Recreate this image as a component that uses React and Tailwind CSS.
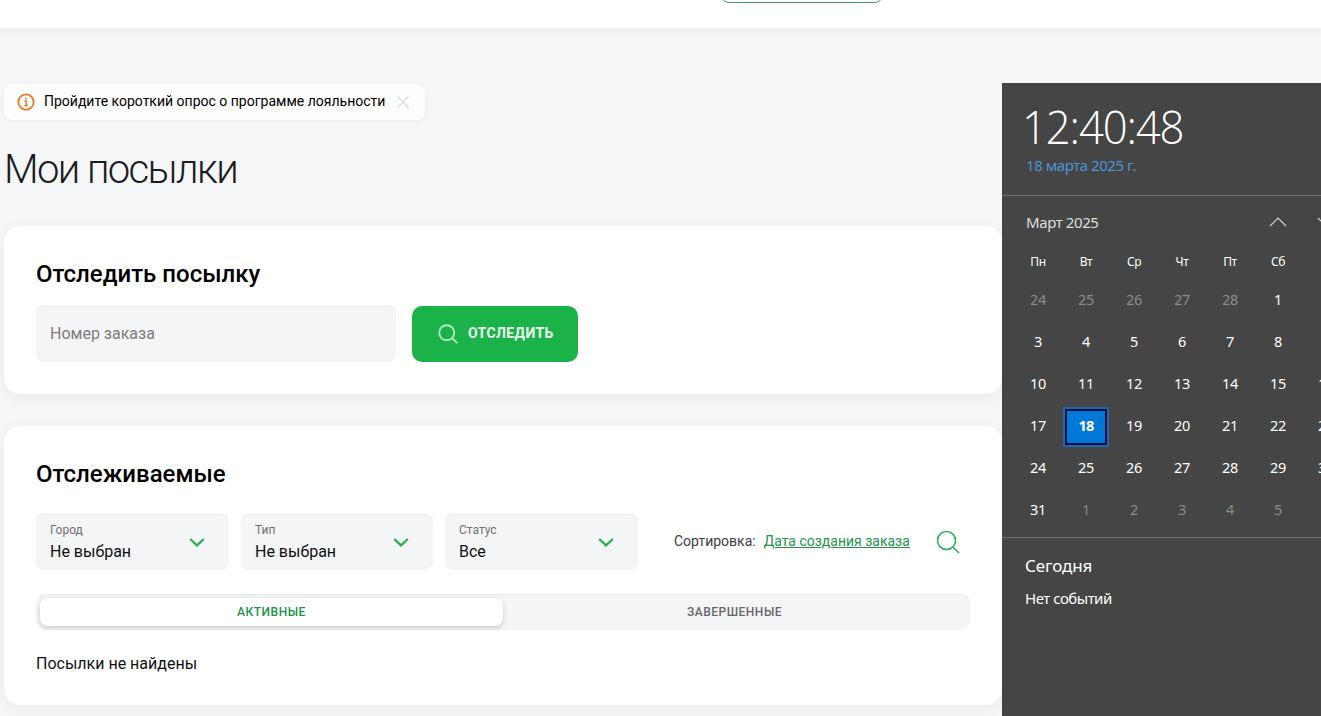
import { useState } from "react";

const weekDays = ["Пн", "Вт", "Ср", "Чт", "Пт", "Сб", "Вс"];

const weeks = [
  [24, 25, 26, 27, 28, 1, 2],
  [3, 4, 5, 6, 7, 8, 9],
  [10, 11, 12, 13, 14, 15, 16],
  [17, 18, 19, 20, 21, 22, 23],
  [24, 25, 26, 27, 28, 29, 30],
  [31, 1, 2, 3, 4, 5, 6],
];

const filters = [
  { label: "Город", value: "Не выбран", width: "w-[193px]" },
  { label: "Тип", value: "Не выбран", width: "w-[192px]" },
  { label: "Статус", value: "Все", width: "w-[193px]" },
];

function SearchIcon({ className, strokeWidth }) {
  return (
    <svg className={className} viewBox="0 0 24 24" fill="none" stroke="currentColor" strokeWidth={strokeWidth}>
      <circle cx="10.5" cy="10.5" r="9" />
      <path d="M17 17L23 23" />
    </svg>
  );
}

function Header() {
  return (
    <header className="relative z-10 h-7 bg-white shadow-[0_4px_8px_rgba(0,0,0,0.05)]">
      <div className="ml-[721px] flex h-[3px] w-[162px] items-end overflow-hidden">
        <div className="h-10 w-full shrink-0 rounded-lg border border-[#3f9f5f]"></div>
      </div>
    </header>
  );
}

function Notice() {
  return (
    <div className="flex h-9 w-[421px] items-center rounded-lg bg-[#fdfdfe] pl-[13px] shadow-[0_1px_6px_rgba(0,0,0,0.04)]">
      <svg className="h-[18px] w-[18px]" viewBox="0 0 18 18" fill="none" stroke="#e67a22" strokeWidth="1.8">
        <circle cx="9" cy="9" r="7.7" />
        <path d="M7.4 8H9.2V12.6M7.4 12.6H11" strokeWidth="1.4" />
        <circle cx="9" cy="5.5" r="1" fill="#e67a22" stroke="none" />
      </svg>
      <span className="ml-[9px] w-[342px] whitespace-nowrap pb-0.5 text-sm leading-5">
        Пройдите короткий опрос о программе лояльности
      </span>
      <svg className="ml-[11px] h-3 w-3" viewBox="0 0 12 12" stroke="#dcdde0" strokeWidth="1.5">
        <path d="M0.5 0.5L11.5 11.5M11.5 0.5L0.5 11.5" />
      </svg>
    </div>
  );
}

function TrackForm() {
  return (
    <section className="mt-8 h-[168px] rounded-2xl bg-white px-8 pt-8 shadow-[0_4px_16px_rgba(0,0,0,0.05)]">
      <h2 className="text-2xl font-medium leading-8">Отследить посылку</h2>
      <div className="mt-4 flex gap-4">
        <input
          className="h-14 w-[360px] rounded-lg bg-[#f4f5f7] px-[14px] pb-0.5 text-base shadow-[inset_0_1px_1px_rgba(0,0,0,0.05)] outline-none placeholder:text-[#7d7d7d]"
          placeholder="Номер заказа"
        />
        <button className="flex h-14 w-[166px] items-center rounded-[10px] bg-[#1bb24a] pl-[26px] text-[#eefff2]">
          <SearchIcon className="h-5 w-5 text-[#b5f0c4]" strokeWidth={2.2} />
          <span className="ml-[10px] pb-0.5 text-sm font-bold tracking-[0.4px]">ОТСЛЕДИТЬ</span>
        </button>
      </div>
    </section>
  );
}

function Filter({ label, value, width }) {
  return (
    <button
      className={`${width} flex h-14 items-center justify-between rounded-lg bg-[#f4f5f7] pl-[14px] pr-6 text-left shadow-[inset_0_1px_1px_rgba(0,0,0,0.05)]`}
    >
      <span className="flex flex-col">
        <span className="text-xs leading-4 text-[#707174]">{label}</span>
        <span className="mt-1 text-base leading-5 text-[#111]">{value}</span>
      </span>
      <svg className="h-[9px] w-4" viewBox="0 0 16 9" fill="none" stroke="#2cab55" strokeWidth="2.2">
        <path d="M1.2 1L8 7.4L14.8 1" />
      </svg>
    </button>
  );
}

function TrackedList() {
  const [tab, setTab] = useState("active");

  return (
    <section className="mt-8 h-[279px] rounded-2xl bg-white px-8 pt-8 shadow-[0_4px_16px_rgba(0,0,0,0.05)]">
      <h2 className="text-2xl font-medium leading-8">Отслеживаемые</h2>
      <div className="mt-6 flex items-center">
        <div className="flex gap-3">
          {filters.map((filter) => (
            <Filter key={filter.label} {...filter} />
          ))}
        </div>
        <span className="ml-9 pb-0.5 text-sm text-[#3c3c3e]">Сортировка:</span>
        <a href="#" className="ml-2 pb-0.5 text-sm text-[#24914a] underline">
          Дата создания заказа
        </a>
        <SearchIcon className="ml-[26px] h-6 w-6 text-[#2cb159]" strokeWidth={1.6} />
      </div>
      <div className="mt-6 flex h-9 w-[934px] rounded-[10px] bg-[#f4f5f7] p-1 text-xs font-medium tracking-[0.5px] shadow-[inset_0_1px_1px_rgba(0,0,0,0.05)]">
        <button
          onClick={() => setTab("active")}
          className={`flex-1 rounded-lg ${tab === "active" ? "bg-white text-[#24914a] shadow-[0_2px_5px_rgba(0,0,0,0.18)]" : "text-[#66676a]"}`}
        >
          АКТИВНЫЕ
        </button>
        <button
          onClick={() => setTab("done")}
          className={`flex-1 rounded-lg ${tab === "done" ? "bg-white text-[#24914a] shadow-[0_2px_5px_rgba(0,0,0,0.18)]" : "text-[#66676a]"}`}
        >
          ЗАВЕРШЕННЫЕ
        </button>
      </div>
      <p className="mt-[22px] text-base leading-6 text-[#111]">Посылки не найдены</p>
    </section>
  );
}

function Day({ day, week }) {
  const muted = (week === 0 && day > 7) || (week === 5 && day < 7);

  if (day === 18) {
    return (
      <div className="flex h-[42px] items-center justify-center">
        <div className="flex h-10 w-[46px] items-center justify-center border-2 border-[#1c69ad] bg-[#0078d7]">
          <div className="flex h-9 w-[42px] items-center justify-center border-2 border-[#050b3c] pb-0.5 font-bold tracking-[-0.8px]">
            {day}
          </div>
        </div>
      </div>
    );
  }
  return (
    <div className={`flex h-[42px] items-center justify-center pb-0.5 ${muted ? "text-[#8b8c8c]" : "text-white"}`}>
      {day}
    </div>
  );
}

function CalendarPanel() {
  return (
    <aside className="mt-[55px] h-[633px] w-[319px] shrink-0 overflow-hidden bg-[#444544] font-['Noto_Sans',sans-serif] text-white">
      <div className="h-[113px] border-b border-[#717271] pl-[22px] pt-[15px]">
        <div className="-ml-0.5 origin-left scale-x-95 whitespace-nowrap font-['Open_Sans',sans-serif] text-[46px] font-light leading-[56px] tracking-[-1.2px]">
          12:40:48
        </div>
        <div className="ml-0.5 text-[15px] leading-[22px] tracking-[-0.45px] text-[#4a97d8]">18 марта 2025 г.</div>
      </div>
      <div className="h-[342px] border-b border-[#717271] pl-3">
        <div className="flex h-[52px] w-[336px] items-center pl-3">
          <span className="w-[243px] text-[15px] tracking-[-0.4px] text-[#dedede]">Март 2025</span>
          <svg className="h-[10px] w-[18px]" viewBox="0 0 18 10" fill="none" stroke="#d4d4d4" strokeWidth="1.2">
            <path d="M1 9L9 1L17 9" />
          </svg>
          <svg className="ml-[30px] h-[10px] w-[18px]" viewBox="0 0 18 10" fill="none" stroke="#d4d4d4" strokeWidth="1.2">
            <path d="M1 1L9 9L17 1" />
          </svg>
        </div>
        <div className="grid h-7 w-[336px] grid-cols-7 items-center text-center text-xs tracking-[-0.4px]">
          {weekDays.map((day) => (
            <span key={day} className="last:pl-1">{day}</span>
          ))}
        </div>
        <div className="mt-1 grid w-[336px] grid-cols-7 text-[14.5px] tracking-[-0.3px]">
          {weeks.map((days, week) => days.map((day) => <Day key={`${week}-${day}`} day={day} week={week} />))}
        </div>
      </div>
      <div className="pl-[23px] pt-[15px]">
        <h3 className="text-[17px] leading-[26px] tracking-[-0.1px]">Сегодня</h3>
        <p className="mt-2 text-[15px] leading-[22px] tracking-[-0.5px]">Нет событий</p>
      </div>
    </aside>
  );
}

export default function App() {
  return (
    <div className="h-[716px] w-[1321px] overflow-hidden bg-[#f5f6f8] font-[Roboto,sans-serif] text-black">
      <Header />
      <div className="flex">
        <main className="w-[1002px] shrink-0 overflow-hidden pl-1 pt-14">
          <Notice />
          <h1 className="mt-[26px] text-[40px] font-light leading-[48px] tracking-[-1.6px] text-[#1c1c1e]">Мои посылки</h1>
          <TrackForm />
          <TrackedList />
        </main>
        <CalendarPanel />
      </div>
    </div>
  );
}
